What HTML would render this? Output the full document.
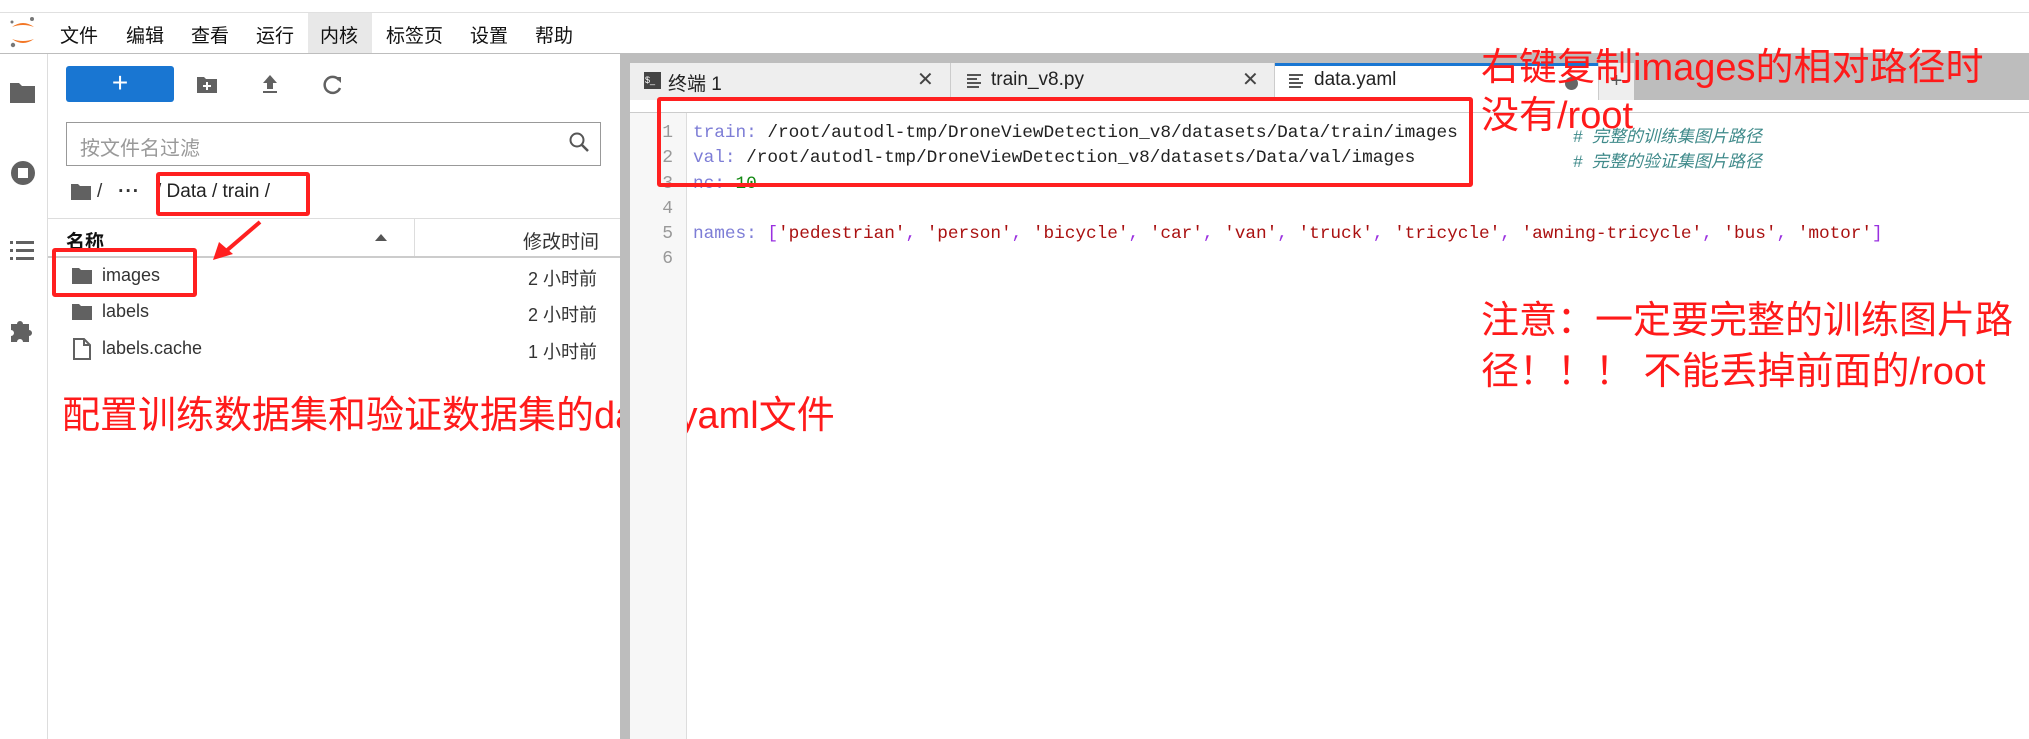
<!DOCTYPE html>
<html><head><meta charset="utf-8"><style>
*{margin:0;padding:0;box-sizing:border-box}
body{width:2029px;height:739px;position:relative;overflow:hidden;background:#fff;font-family:"Liberation Sans","Noto Sans CJK SC",sans-serif;color:#222}
.a{position:absolute}
.menu{font-size:19px;top:21px;color:#111}
.mono{font-family:"Liberation Mono","Noto Sans CJK SC",monospace;font-size:17.8px;letter-spacing:-0.05px;white-space:pre}
.ln{color:#999;font-family:"Liberation Mono",monospace;font-size:18px;width:30px;text-align:right}
.red{color:#ff1a1a;font-size:38px;font-family:"Liberation Sans","Noto Sans CJK SC",sans-serif;white-space:nowrap;line-height:1}
.box{border:4px solid #ff2020;border-radius:3px}
.k{color:#7d7dd6}.s{color:#aa1111}.n{color:#118811}.b{color:#9a30e0}.c{color:#3f8a8a;font-style:italic}
.row{font-size:18px;color:#333}
</style></head><body>
<!-- top menu -->
<div class="a" style="left:0;top:12px;width:2029px;height:1px;background:#e0e0e0"></div>
<div class="a" style="left:0;top:53px;width:2029px;height:1px;background:#bdbdbd"></div>
<div class="a" style="left:308px;top:13px;width:64px;height:40px;background:#e8e8e8"></div>
<svg class="a" style="left:8px;top:16px" width="30" height="34" viewBox="0 0 30 34"><path d="M4 11 Q15 3 26 11 Q15 7 4 11Z" fill="#f37726"/><path d="M4 23 Q15 31 26 23 Q15 27 4 23Z" fill="#f37726"/><circle cx="24" cy="3" r="2" fill="#777"/><circle cx="4" cy="6" r="1.5" fill="#777"/><circle cx="5" cy="29" r="2.2" fill="#777"/></svg>
<div class="a menu" style="left:60px">文件</div>
<div class="a menu" style="left:126px">编辑</div>
<div class="a menu" style="left:191px">查看</div>
<div class="a menu" style="left:256px">运行</div>
<div class="a menu" style="left:320px">内核</div>
<div class="a menu" style="left:386px">标签页</div>
<div class="a menu" style="left:470px">设置</div>
<div class="a menu" style="left:535px">帮助</div>
<!-- left sidebar -->
<div class="a" style="left:47px;top:54px;width:1px;height:685px;background:#ddd"></div>
<svg class="a" style="left:9px;top:80px" width="28" height="24"><path d="M1 3 h9 l3 3 h13 v17 h-25z" fill="#616161"/></svg>
<svg class="a" style="left:9px;top:159px" width="28" height="28"><circle cx="14" cy="14" r="12" fill="#616161"/><rect x="9" y="9" width="10" height="10" fill="#fff"/></svg>
<svg class="a" style="left:9px;top:239px" width="28" height="24"><g fill="#616161"><rect x="1" y="2" width="3" height="3"/><rect x="7" y="2" width="18" height="3"/><rect x="1" y="10" width="3" height="3"/><rect x="7" y="10" width="18" height="3"/><rect x="1" y="18" width="3" height="3"/><rect x="7" y="18" width="18" height="3"/></g></svg>
<svg class="a" style="left:8px;top:316px" width="28" height="28"><path d="M3 8 h6 a3 3 0 1 1 6 0 h6 v6 a3 3 0 1 1 0 6 v6 h-6 a3 3 0 1 0 -6 0 h-6 v-6 a3 3 0 1 0 0 -6z" fill="#616161"/></svg>
<!-- file browser -->
<div class="a" style="left:66px;top:66px;width:108px;height:36px;background:#1976d2;border-radius:3px;color:#fff;font-size:28px;text-align:center;line-height:34px">+</div>
<svg class="a" style="left:196px;top:75px" width="24" height="20"><path d="M1 2 h7 l2 2 h11 v14 h-20z" fill="#616161"/><path d="M11 7 v8 M7 11 h8" stroke="#fff" stroke-width="2"/></svg>
<svg class="a" style="left:260px;top:73px" width="20" height="22"><path d="M10 2 l7 8 h-4 v6 h-6 v-6 h-4z M3 18 h14 v2 h-14z" fill="#616161"/></svg>
<svg class="a" style="left:322px;top:74px" width="22" height="22"><path d="M17 6 A8 8 0 1 0 18 14" stroke="#616161" stroke-width="2.5" fill="none"/><path d="M13 3 l6 0 l0 6z" fill="#616161"/></svg>
<div class="a" style="left:66px;top:122px;width:535px;height:44px;border:1px solid #999"></div>
<div class="a" style="left:80px;top:132px;font-size:20px;color:#999">按文件名过滤</div>
<svg class="a" style="left:568px;top:131px" width="24" height="24"><circle cx="9" cy="9" r="6.5" stroke="#555" stroke-width="2" fill="none"/><path d="M14 14 l6 6" stroke="#555" stroke-width="2.5"/></svg>
<svg class="a" style="left:70px;top:183px" width="22" height="18"><path d="M1 1 h7 l2 2 h11 v14 h-20z" fill="#616161"/></svg>
<div class="a" style="left:97px;top:181px;font-size:19px;color:#333">/&nbsp;&nbsp;&nbsp;<b style="letter-spacing:1px">···</b></div>
<div class="a" style="left:156px;top:181px;font-size:19px;color:#222">/ Data / train /</div>
<div class="a box" style="left:156px;top:172px;width:154px;height:44px"></div>
<div class="a" style="left:48px;top:218px;width:572px;height:1px;background:#ddd"></div>
<div class="a" style="left:48px;top:256px;width:572px;height:2px;background:#ccc"></div>
<div class="a" style="left:414px;top:219px;width:1px;height:37px;background:#ddd"></div>
<div class="a" style="left:66px;top:227px;font-size:19px;font-weight:bold;color:#111">名称</div>
<svg class="a" style="left:374px;top:232px" width="14" height="10"><path d="M1 9 L7 2 L13 9z" fill="#555"/></svg>
<div class="a" style="left:523px;top:227px;font-size:19px;color:#333">修改时间</div>
<svg class="a" style="left:71px;top:267px" width="22" height="18"><path d="M1 1 h7 l2 2 h11 v14 h-20z" fill="#616161"/></svg>
<div class="a row" style="left:102px;top:265px">images</div>
<div class="a row" style="left:528px;top:265px">2 小时前</div>
<svg class="a" style="left:71px;top:303px" width="22" height="18"><path d="M1 1 h7 l2 2 h11 v14 h-20z" fill="#616161"/></svg>
<div class="a row" style="left:102px;top:301px">labels</div>
<div class="a row" style="left:528px;top:301px">2 小时前</div>
<svg class="a" style="left:72px;top:338px" width="20" height="22"><path d="M2 1 h10 l6 6 v14 h-16z M12 1 v6 h6" stroke="#616161" stroke-width="2" fill="none"/></svg>
<div class="a row" style="left:102px;top:338px">labels.cache</div>
<div class="a row" style="left:528px;top:338px">1 小时前</div>
<div class="a box" style="left:52px;top:248px;width:145px;height:49px"></div>
<svg class="a" style="left:205px;top:218px" width="60" height="45"><path d="M55 4 L20 34" stroke="#ff2020" stroke-width="4"/><path d="M8 42 L14 24 L28 36z" fill="#ff2020"/></svg>
<div class="a red" style="left:62px;top:397px">配置训练数据集和验证数据集的data.yaml文件</div>
<!-- editor area -->
<div class="a" style="left:620px;top:54px;width:1409px;height:46px;background:#bdbdbd"></div>
<div class="a" style="left:620px;top:54px;width:10px;height:685px;background:#bdbdbd"></div>
<div class="a" style="left:630px;top:63px;width:321px;height:37px;background:#eeeeee;border-right:1px solid #ccc"></div>
<div class="a" style="left:951px;top:63px;width:324px;height:37px;background:#eeeeee;border-right:1px solid #ccc"></div>
<div class="a" style="left:1275px;top:63px;width:323px;height:37px;background:#fff;border-top:3px solid #1976d2"></div>
<div class="a" style="left:1598px;top:63px;width:36px;height:37px;background:#eee;border-left:1px solid #ccc;text-align:center;font-size:20px;line-height:37px;color:#555">+</div>
<div class="a" style="left:644px;top:72px;width:17px;height:17px;background:#444;color:#fff;font-size:9px;line-height:17px;padding-left:1px">$_</div>
<div class="a" style="left:668px;top:69px;font-size:19px">终端 1</div>
<div class="a" style="left:917px;top:67px;font-size:20px;color:#444">✕</div>
<svg class="a" style="left:967px;top:73px" width="16" height="16"><g fill="#555"><rect y="1" width="14" height="2"/><rect y="5" width="10" height="2"/><rect y="9" width="14" height="2"/><rect y="13" width="12" height="2"/></g></svg>
<div class="a" style="left:991px;top:69px;font-size:19px">train_v8.py</div>
<div class="a" style="left:1242px;top:67px;font-size:20px;color:#444">✕</div>
<svg class="a" style="left:1289px;top:73px" width="16" height="16"><g fill="#555"><rect y="1" width="14" height="2"/><rect y="5" width="10" height="2"/><rect y="9" width="14" height="2"/><rect y="13" width="12" height="2"/></g></svg>
<div class="a" style="left:1314px;top:69px;font-size:19px">data.yaml</div>
<div class="a" style="left:1565px;top:77px;width:13px;height:13px;border-radius:50%;background:#666"></div>
<div class="a" style="left:630px;top:112px;width:1399px;height:1px;background:#ccc"></div>
<div class="a" style="left:630px;top:113px;width:57px;height:626px;background:#f7f7f7;border-right:1px solid #ddd"></div>
<div class="a ln" style="left:643px;top:123px">1</div>
<div class="a ln" style="left:643px;top:148px">2</div>
<div class="a ln" style="left:643px;top:174px">3</div>
<div class="a ln" style="left:643px;top:199px">4</div>
<div class="a ln" style="left:643px;top:224px">5</div>
<div class="a ln" style="left:643px;top:249px">6</div>
<div class="a mono" style="left:693px;top:123px"><span class="k">train:</span> /root/autodl-tmp/DroneViewDetection_v8/datasets/Data/train/images</div>
<div class="a mono" style="left:693px;top:148px"><span class="k">val:</span> /root/autodl-tmp/DroneViewDetection_v8/datasets/Data/val/images</div>
<div class="a mono" style="left:693px;top:174px"><span class="k">nc:</span> <span class="n">10</span></div>
<div class="a mono" style="left:693px;top:224px"><span class="k">names:</span> <span class="b">[</span><span class="s">'pedestrian'</span><span class="b">,</span> <span class="s">'person'</span><span class="b">,</span> <span class="s">'bicycle'</span><span class="b">,</span> <span class="s">'car'</span><span class="b">,</span> <span class="s">'van'</span><span class="b">,</span> <span class="s">'truck'</span><span class="b">,</span> <span class="s">'tricycle'</span><span class="b">,</span> <span class="s">'awning-tricycle'</span><span class="b">,</span> <span class="s">'bus'</span><span class="b">,</span> <span class="s">'motor'</span><span class="b">]</span></div>
<div class="a c" style="left:1573px;top:122px;font-size:17px">#&nbsp; 完整的训练集图片路径</div>
<div class="a c" style="left:1573px;top:147px;font-size:17px">#&nbsp; 完整的验证集图片路径</div>
<div class="a box" style="left:657px;top:97px;width:816px;height:90px"></div>
<div class="a red" style="left:1481px;top:49px">右键复制images的相对路径时</div>
<div class="a red" style="left:1481px;top:97px">没有/root</div>
<div class="a red" style="left:1481px;top:302px">注意：一定要完整的训练图片路</div>
<div class="a red" style="left:1481px;top:353px">径！！！ 不能丢掉前面的/root</div>
</body></html>
